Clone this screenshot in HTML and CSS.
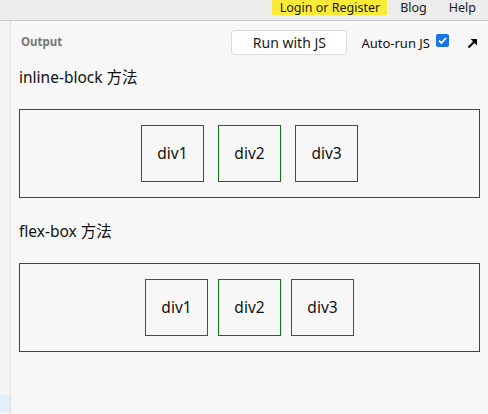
FILE: index.html
```html
<!DOCTYPE html>
<html>
<head>
<meta charset="utf-8">
<link rel="stylesheet" href="styles.css">
</head>
<body>
<header class="topbar">
  <a class="nav login">Login or Register</a>
  <a class="nav blog">Blog</a>
  <a class="nav help">Help</a>
</header>
<div class="layout">
  <aside class="strip"><div class="strip-hl"></div></aside>
  <main class="main">
    <div class="toolbar">
      <span class="out-label">Output</span>
      <button class="run">Run with JS</button>
      <label class="autorun">Auto-run JS
        <svg class="check" width="13" height="13" viewBox="0 0 13 13"><rect x="0" y="0" width="13" height="13" rx="2" fill="#1a73e8"/><path d="M3 6.6 L5.4 9 L10 4" fill="none" stroke="#fff" stroke-width="1.8"/></svg>
      </label>
      <svg class="popout" width="11" height="11" viewBox="0 0 11 11"><path d="M1.5 9.5 L9 2" stroke="#000" stroke-width="2" fill="none"/><path d="M3.5 1 L10 1 L10 7.5 Z" fill="#000"/></svg>
    </div>
    <div class="content">
      <p class="title first">inline-block 方法</p>
      <div class="box inline">
        <div class="item">div1</div>
        <div class="item">div2</div>
        <div class="item">div3</div>
      </div>
      <p class="title">flex-box 方法</p>
      <div class="box flex">
        <div class="item">div1</div>
        <div class="item">div2</div>
        <div class="item">div3</div>
      </div>
    </div>
  </main>
</div>
</body>
</html>
```
FILE: styles.css
```css
* { box-sizing: border-box; }
html, body { margin: 0; height: 100%; }
body {
  font-family: "Noto Sans", "Noto Sans CJK SC", sans-serif;
  background: #f7f7f7;
  color: #111;
  display: flex;
  flex-direction: column;
  overflow: hidden;
}
.topbar {
  height: 21px;
  background: #ececec;
  border-bottom: 1px solid #cbcbcb;
  display: flex;
  justify-content: flex-end;
  align-items: flex-start;
  font-size: 12.5px;
  padding-right: 12px;
  flex: none;
}
.nav { color: #1a1a1a; line-height: 15px; height: 15px; }
.login { background: #fdea37; padding: 0 7px 0 8px; margin-right: 13px; }
.blog { margin-right: 22px; }
.layout { flex: 1; display: flex; }
.strip {
  width: 11px;
  background: #f4f4f4;
  border-right: 1px solid #e2e2e2;
  position: relative;
  flex: none;
}
.strip-hl {
  position: absolute;
  left: 0; right: 0;
  top: 374px;
  height: 17px;
  background: #e3edfb;
}
.main { flex: 1; background: #f7f7f7; }
.toolbar {
  height: 45px;
  display: flex;
  align-items: center;
  padding: 0 10px 2px 10px;
}
.out-label {
  font-size: 11.5px;
  font-weight: bold;
  color: #777;
  margin-right: auto;
  margin-top: -2px;
}
.run {
  width: 116px;
  height: 25px;
  background: #fff;
  border: 1px solid #dcdcdc;
  border-radius: 4px;
  font-family: inherit;
  font-size: 14px;
  color: #1a1a1a;
  padding: 0;
  margin-right: 14px;
  margin-top: -1px;
}
.autorun {
  font-size: 13px;
  display: flex;
  align-items: center;
  color: #111;
  margin-top: 1px;
}
.check { margin-left: 6px; margin-top: -5px; }
.popout { margin-left: 18px; margin-top: 2px; }
.content { padding: 0 8px 0 8px; }
.title {
  font-size: 15.5px;
  line-height: 22px;
  margin: 22px 0 21px;
}
.title.first { margin-top: 0; }
.box {
  border: 1px solid #e00000;
  padding: 10px;
  font-size: 15.5px;
  height: 89px;
}
.inline { text-align: center; line-height: 0; }
.flex { display: flex; justify-content: center; }
.item {
  width: 63px;
  height: 57px;
  border: 1px solid #0a7a0a;
  margin: 5px;
  line-height: 55px;
  text-align: center;
  color: #111;
}
.inline .item { display: inline-block; vertical-align: top; }
```
